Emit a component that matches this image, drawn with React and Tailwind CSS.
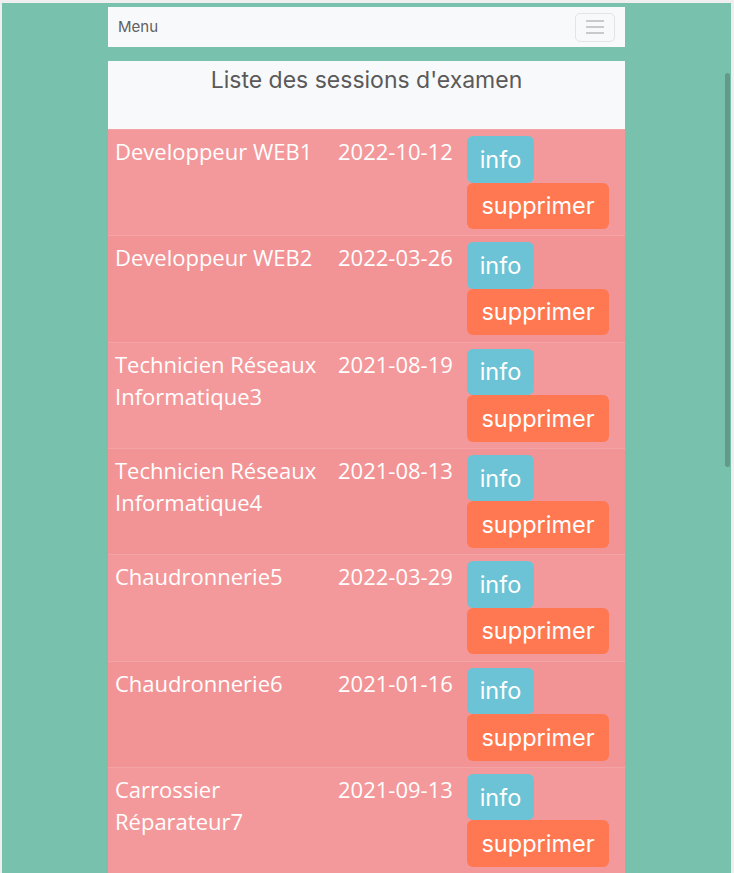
import React from "react";

// sessions shown in the table
const sessions = [
    { name: "Developpeur WEB1", date: "2022-10-12" },
    { name: "Developpeur WEB2", date: "2022-03-26" },
    { name: "Technicien Réseaux Informatique3", date: "2021-08-19" },
    { name: "Technicien Réseaux Informatique4", date: "2021-08-13" },
    { name: "Chaudronnerie5", date: "2022-03-29" },
    { name: "Chaudronnerie6", date: "2021-01-16" },
    { name: "Carrossier Réparateur7", date: "2021-09-13" },
];

const heading = { fontFamily: "Inter, 'Noto Sans', sans-serif" };

function Row({ session, index }) {
    return (
        <div
            className={
                "grid grid-cols-[223px_129px_1fr] border-t border-[#f5a3a5] text-white " +
                (index % 2 === 0 ? "bg-[#f4999b]" : "bg-[#f29496]")
            }
        >
            <div className="px-[7px] pt-[5px] text-[22px] leading-[32px]">{session.name}</div>
            <div className="px-[7px] pt-[5px] text-[22px] leading-[32px]">{session.date}</div>
            <div className="flex flex-col items-start px-[7px] pt-[6px] pb-[6.33px]" style={heading}>
                <button className="flex h-[46.5px] w-[67px] items-center justify-center rounded-[6px] bg-[#6cc3d5] text-[23.5px] text-white">
                    info
                </button>
                <button className="flex h-[46.5px] w-[142px] items-center justify-center rounded-[6px] bg-[#ff7851] text-[23.5px] text-white">
                    supprimer
                </button>
            </div>
        </div>
    );
}

export default function App() {
    return (
        <div className="h-[873px] overflow-hidden bg-[#efefef] pt-[3px] pl-[2px] pr-[3px]" style={{ fontFamily: "'Open Sans', sans-serif" }}>
            <div className="relative h-full overflow-hidden bg-[#78c2ad] pt-[4px] pl-[106px]">
                <div className="w-[517px]">
                    {/* navbar */}
                    <nav className="flex h-[40px] items-center justify-between bg-[#f8f9fa] pl-[10px] pr-[10px]">
                        <span className="text-[15px] text-[#5f6062]" style={heading}>Menu</span>
                        <button className="flex h-[29px] w-[40px] flex-col items-center justify-center gap-[4px] rounded-[5px] border border-[#e3e4e5]">
                            <span className="h-[2px] w-[18px] bg-[#c9cacb]" />
                            <span className="h-[2px] w-[18px] bg-[#c9cacb]" />
                            <span className="h-[2px] w-[18px] bg-[#c9cacb]" />
                        </button>
                    </nav>

                    <div className="mt-[14px] h-[68px] bg-[#f8f9fa] pt-[5px] text-center">
                        <h3 className="text-[23px] leading-[28px] text-[#5a5a5a]" style={heading}>
                            Liste des sessions d'examen
                        </h3>
                    </div>

                    <div>
                        {sessions.map((s, i) => (
                            <Row key={s.name} session={s} index={i} />
                        ))}
                    </div>
                </div>

                {/* overlay scrollbar */}
                <div className="absolute right-[1px] top-[70px] h-[394px] w-[5px] rounded-full bg-[#64998a]" />
            </div>
        </div>
    );
}
